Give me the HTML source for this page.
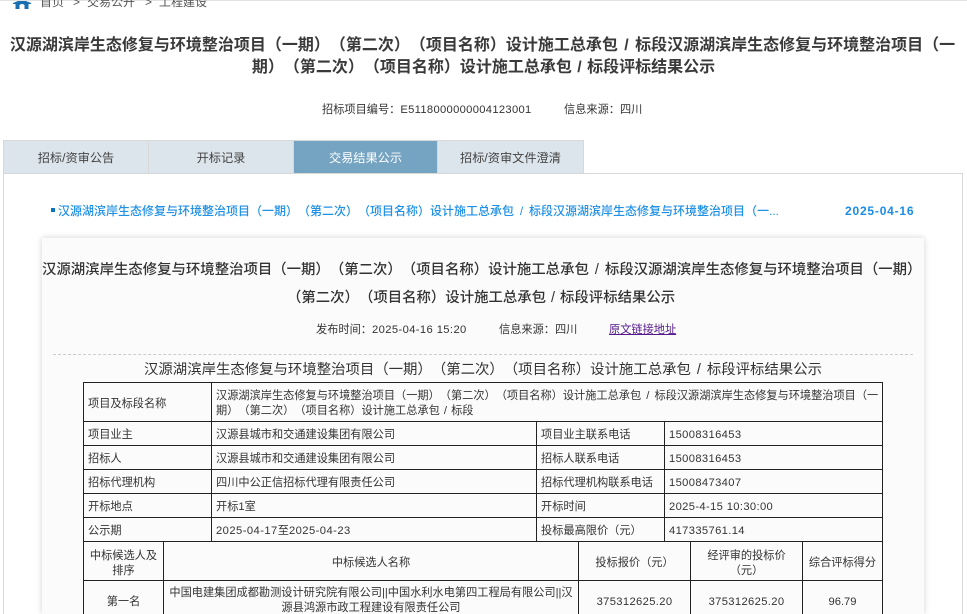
<!DOCTYPE html>
<html lang="zh-CN"><head><meta charset="utf-8"><title>评标结果公示</title>
<style>
html,body{margin:0;padding:0;background:#fff;height:614px;overflow:hidden}
#p{position:absolute;left:0;top:0;width:967px;height:614px;overflow:hidden;font-family:"Liberation Sans","Microsoft YaHei","Noto Sans CJK SC",sans-serif;color:#333;text-spacing-trim:space-all}
.a{position:absolute;white-space:nowrap}
.c{text-align:center}
.box{position:absolute;box-sizing:border-box}
.l{position:absolute;background:#222}
.t{position:absolute;font-size:11.2px;line-height:15px;color:#333;white-space:nowrap}
.n{letter-spacing:.36px}
.tab{position:absolute;top:141px;height:32px;line-height:35px;text-align:center;font-size:12.2px;background:#dce5eb;color:#444}
</style></head><body><div id="p">
<div class="box" style="left:0;top:0;width:967px;height:1px;background:#e2e2e2"></div>
<svg class="a" style="left:13px;top:0" width="18" height="9" viewBox="0 0 18 9"><path d="M0 3L5 1H13L18 3V4H15.5V9H11.5V5Q9 3 6.500 5V9H2.500V4H0Z" fill="#1a6fb0"/></svg>
<div class="a" style="left:40px;top:-6px;font-size:12px;line-height:16px;color:#555">首页</div>
<div class="a" style="left:73px;top:-6px;font-size:12px;line-height:16px;color:#555">&gt;</div>
<div class="a" style="left:87px;top:-6px;font-size:12px;line-height:16px;color:#555">交易公开</div>
<div class="a" style="left:145px;top:-6px;font-size:12px;line-height:16px;color:#555">&gt;</div>
<div class="a" style="left:159px;top:-6px;font-size:12px;line-height:16px;color:#555">工程建设</div>

<div class="a c" style="left:-1px;width:967px;top:35px;font-size:16px;line-height:22px;font-weight:700;color:#3a3a3a;word-spacing:2px">汉源湖滨岸生态修复与环境整治项目（一期）（第二次）（项目名称）设计施工总承包 / 标段汉源湖滨岸生态修复与环境整治项目（一</div>
<div class="a c" style="left:0;width:967px;top:57px;font-size:16px;line-height:22px;font-weight:700;color:#3a3a3a;word-spacing:1px">期）（第二次）（项目名称）设计施工总承包 / 标段评标结果公示</div>
<div class="a" style="left:322px;top:102px;font-size:11.2px;line-height:16px;color:#333">招标项目编号：<span style="letter-spacing:.32px">E5118000000004123001</span></div>
<div class="a" style="left:564px;top:102px;font-size:11.2px;line-height:16px;color:#333">信息来源：四川</div>

<div class="box" style="left:3px;top:173px;width:960px;height:441px;border:1px solid #d8d8d8;border-bottom:0;background:#fff"></div>
<div class="box" style="left:3px;top:140px;width:581px;height:34px;border:1px solid #d8d8d8;background:#d8d8d8"></div>
<div class="tab" style="left:4px;width:144px">招标/资审公告</div>
<div class="tab" style="left:149px;width:144px">开标记录</div>
<div class="tab" style="left:294px;width:143px;background:#75a4c2;color:#fff">交易结果公示</div>
<div class="tab" style="left:438px;width:145px">招标/资审文件澄清</div>

<div class="box" style="left:51px;top:208px;width:4px;height:4px;background:#0a74bb"></div>
<div class="a" style="left:58px;top:202px;font-size:12px;line-height:18px;color:#1e90e6;font-weight:500;word-spacing:2.500px">汉源湖滨岸生态修复与环境整治项目（一期）（第二次）（项目名称）设计施工总承包 / 标段汉源湖滨岸生态修复与环境整治项目（一...</div>
<div class="a" style="left:845px;top:202px;font-size:12px;line-height:18px;color:#1a8de6;font-weight:700;letter-spacing:.8px">2025-04-16</div>

<div class="box" style="left:42px;top:238px;width:882px;height:376px;background:#fbfbfb;box-shadow:0 0 6px rgba(0,0,0,.18)"></div>
<div class="a c" style="left:42px;width:874px;top:256px;font-size:14.4px;line-height:28px;font-weight:500;color:#333;word-spacing:2px">汉源湖滨岸生态修复与环境整治项目（一期）（第二次）（项目名称）设计施工总承包 / 标段汉源湖滨岸生态修复与环境整治项目（一期）</div>
<div class="a" style="left:287px;top:284px;font-size:14.4px;line-height:28px;font-weight:500;color:#333;word-spacing:1px">（第二次）（项目名称）设计施工总承包 / 标段评标结果公示</div>
<div class="a" style="left:316px;top:322px;font-size:11.2px;line-height:16px">发布时间：<span style="letter-spacing:.4px">2025-04-16 15:20</span></div>
<div class="a" style="left:499px;top:322px;font-size:11.2px;line-height:16px">信息来源：四川</div>
<div class="a" style="left:609px;top:322px;font-size:11.2px;line-height:16px;color:#551a8b;text-decoration:underline">原文链接地址</div>
<div class="box" style="left:53px;top:354px;width:860px;height:0;border-top:1px dashed #ccc"></div>
<div class="a c" style="left:42px;width:882px;top:361px;font-size:14.4px;line-height:18px;color:#333;word-spacing:2px">汉源湖滨岸生态修复与环境整治项目（一期）（第二次）（项目名称）设计施工总承包 / 标段评标结果公示</div>

<div class="l" style="left:83px;top:382px;width:800px;height:1px"></div>
<div class="l" style="left:83px;top:421px;width:800px;height:1px"></div>
<div class="l" style="left:83px;top:445px;width:800px;height:1px"></div>
<div class="l" style="left:83px;top:469px;width:800px;height:1px"></div>
<div class="l" style="left:83px;top:493px;width:800px;height:1px"></div>
<div class="l" style="left:83px;top:517px;width:800px;height:1px"></div>
<div class="l" style="left:83px;top:541px;width:800px;height:1px"></div>
<div class="l" style="left:83px;top:580px;width:800px;height:1px"></div>
<div class="l" style="left:83px;top:382px;width:1px;height:232px"></div>
<div class="l" style="left:882px;top:382px;width:1px;height:232px"></div>
<div class="l" style="left:211px;top:382px;width:1px;height:159px"></div>
<div class="l" style="left:536px;top:421px;width:1px;height:120px"></div>
<div class="l" style="left:664px;top:421px;width:1px;height:120px"></div>
<div class="l" style="left:163px;top:541px;width:1px;height:73px"></div>
<div class="l" style="left:578px;top:541px;width:1px;height:73px"></div>
<div class="l" style="left:690px;top:541px;width:1px;height:73px"></div>
<div class="l" style="left:802px;top:541px;width:1px;height:73px"></div>

<div class="t" style="left:88px;top:397px">项目及标段名称</div>
<div class="t" style="left:216px;top:389px;word-spacing:2px">汉源湖滨岸生态修复与环境整治项目（一期）（第二次）（项目名称）设计施工总承包 / 标段汉源湖滨岸生态修复与环境整治项目（一</div>
<div class="t" style="left:216px;top:404px;word-spacing:1px">期）（第二次）（项目名称）设计施工总承包 / 标段</div>

<div class="t" style="left:88px;top:428px">项目业主</div>
<div class="t" style="left:216px;top:428px">汉源县城市和交通建设集团有限公司</div>
<div class="t" style="left:541px;top:428px">项目业主联系电话</div>
<div class="t n" style="left:669px;top:428px">15008316453</div>

<div class="t" style="left:88px;top:452px">招标人</div>
<div class="t" style="left:216px;top:452px">汉源县城市和交通建设集团有限公司</div>
<div class="t" style="left:541px;top:452px">招标人联系电话</div>
<div class="t n" style="left:669px;top:452px">15008316453</div>

<div class="t" style="left:88px;top:476px">招标代理机构</div>
<div class="t" style="left:216px;top:476px">四川中公正信招标代理有限责任公司</div>
<div class="t" style="left:541px;top:476px">招标代理机构联系电话</div>
<div class="t n" style="left:669px;top:476px">15008473407</div>

<div class="t" style="left:88px;top:500px">开标地点</div>
<div class="t" style="left:216px;top:500px">开标1室</div>
<div class="t" style="left:541px;top:500px">开标时间</div>
<div class="t n" style="left:669px;top:500px">2025-4-15 10:30:00</div>

<div class="t" style="left:88px;top:524px">公示期</div>
<div class="t" style="left:216px;top:524px"><span style="letter-spacing:.45px">2025-04-17</span>至<span style="letter-spacing:.45px">2025-04-23</span></div>
<div class="t" style="left:541px;top:524px">投标最高限价（元）</div>
<div class="t n" style="left:669px;top:524px">417335761.14</div>

<div class="t c" style="left:84px;width:79px;top:549px">中标候选人及<br>排序</div>
<div class="t c" style="left:164px;width:414px;top:556px">中标候选人名称</div>
<div class="t c" style="left:579px;width:111px;top:556px">投标报价（元）</div>
<div class="t c" style="left:691px;width:111px;top:549px">经评审的投标价<br>（元）</div>
<div class="t c" style="left:803px;width:79px;top:556px">综合评标得分</div>

<div class="t c" style="left:84px;width:79px;top:595px">第一名</div>
<div class="t c" style="left:164px;width:414px;top:586px">中国电建集团成都勘测设计研究院有限公司||中国水利水电第四工程局有限公司||汉<br>源县鸿源市政工程建设有限责任公司</div>
<div class="t c n" style="left:579px;width:111px;top:595px">375312625.20</div>
<div class="t c n" style="left:691px;width:111px;top:595px">375312625.20</div>
<div class="t c" style="left:803px;width:79px;top:595px">96.79</div>
</div></body></html>
